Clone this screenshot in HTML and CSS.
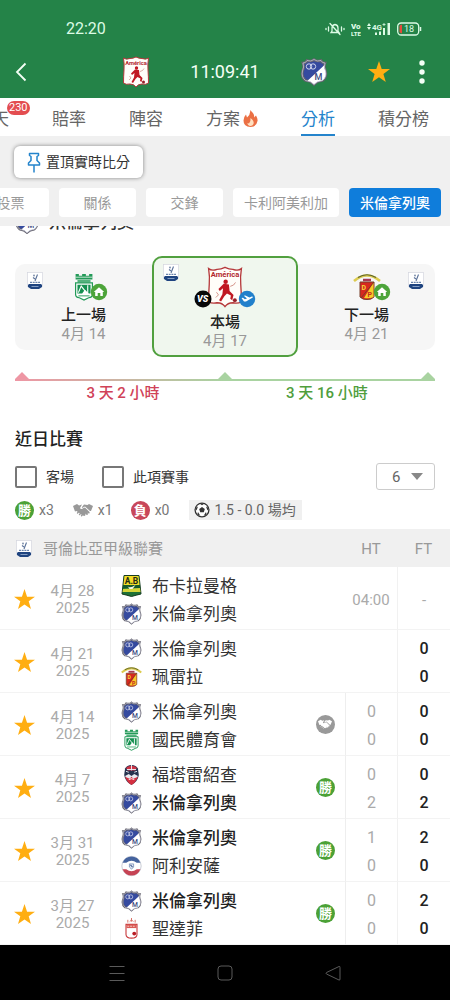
FILE: index.html
```html
<!DOCTYPE html>
<html lang="zh-Hant">
<head>
<meta charset="utf-8">
<meta name="viewport" content="width=device-width, initial-scale=1">
<title>分析</title>
<link rel="stylesheet" href="styles.css">
</head>
<body>
<svg class="sprite" aria-hidden="true">
  <symbol id="millonarios" viewBox="0 0 28 28">
    <path d="M3 5Q6 5 7 2.500Q11 4 14 1.500Q17 4 21 2.500Q22 5 25 5Q23.500 9 25.500 13Q27 19 22.500 22.500Q17 23 14 26.500Q11 23 5.500 22.500Q1 19 2.500 13Q4.500 9 3 5Z" fill="#354a9f" stroke="#66646f" stroke-width="2.600"/>
    <path d="M24.500 7Q23.500 9.500 25.500 13Q27 19 22.500 22.500Q17 23 14 26.500Q11.500 23.500 7.500 22.800Z" fill="#fff"/>
    <path d="M3 5Q6 5 7 2.500Q11 4 14 1.500Q17 4 21 2.500Q22 5 25 5Q23.500 9 25.500 13Q27 19 22.500 22.500Q17 23 14 26.500Q11 23 5.500 22.500Q1 19 2.500 13Q4.500 9 3 5Z" fill="none" stroke="#c9cde0" stroke-width=".7"/>
    <circle cx="9" cy="8.500" r="2.700" fill="none" stroke="#dfe3f4" stroke-width=".9"/>
    <circle cx="13" cy="8.500" r="2.700" fill="none" stroke="#dfe3f4" stroke-width=".9"/>
    <text x="14.500" y="21.500" font-size="9" font-weight="500" fill="#3c4a80">M</text>
  </symbol>
  <symbol id="america" viewBox="0 0 28 32">
    <path d="M1.500 2Q4 4 8 2.500Q11 2.500 14 1Q17 2.500 20 2.500Q24 4 26.500 2Q25.500 8 26 14Q26.500 21 26.500 27Q24 29 20 28Q16 28 14 31Q12 28 8 28Q4 29 1.500 27Q1.500 21 2 14Q2.500 8 1.500 2Z" fill="#fffdf9" stroke="#b5383a"/>
    <text x="14" y="8.500" font-size="5.800" font-weight="700" text-anchor="middle" fill="#b3282e">América</text>
    <circle cx="14.500" cy="12" r="1.700" fill="#c01822"/>
    <path d="M13 13.500L17 14L17.500 19L20.500 22L19.500 26L18 25L18.500 22.500L15.500 21L13.500 23L11 27L9.500 26L12 21.500L12.500 17L10 19L9 17.500Z" fill="#c01822"/>
    <path d="M18 15.500L20.500 14.500L22 12.500M7.500 20L9 22L7 24" fill="none" stroke="#d08a80" stroke-width=".7"/>
    <circle cx="21.500" cy="26" r="1.500" fill="#96202a"/>
  </symbol>
  <symbol id="nacional" viewBox="0 0 22 30">
    <path d="M2 1H5.500V3H9V1H13V3H16.500V1H20V7H2Z" fill="#239a58"/>
    <path d="M2 4.500H20" stroke="#fff" stroke-width=".8"/>
    <path d="M4 7.500H18V10.500H4Z" fill="#54b27d"/>
    <path d="M2 10.500H20V23Q20 26 16 26.500L11 29L6 26.500Q2 26 2 23Z" fill="#fff" stroke="#239a58" stroke-width="1.300"/>
    <path d="M4 12.500H18V22H16L12 18L9 22H4Z" fill="#159050"/>
    <path d="M5 21L8 14L15 23V13" stroke="#fff" stroke-width="1.200" fill="none"/>
    <path d="M5 24.500H17" stroke="#239a58"/>
  </symbol>
  <symbol id="pereira" viewBox="0 0 28 28">
    <path d="M1 8Q14-3 27 8" fill="none" stroke="#dccb4e" stroke-width="2.600"/>
    <path d="M5 4.500Q14-1 23 4.500" fill="none" stroke="#5d642e" stroke-width="1.200"/>
    <path d="M10 7H18" stroke="#a63a54" stroke-width="2.500"/>
    <path d="M7 9H21V24Q18 27 14 26.500Q10 27 7 24Z" fill="#d7281f" stroke="#79402a"/>
    <path d="M20.500 9.500V24Q17 26 11 25Z" fill="#f5cb28"/>
    <path d="M21 9L8 25" stroke="#51442a" stroke-width=".7"/>
    <text x="8.500" y="17" font-size="7" font-weight="700" fill="#f5d63c">D</text>
    <text x="14.500" y="24" font-size="7" font-weight="700" fill="#c92620">P</text>
  </symbol>
  <symbol id="bucaramanga" viewBox="0 0 20 22">
    <path d="M2.500.5H17.500L19.500 19Q15 20 10 21.500Q5 20 .5 19Z" fill="#1e7136" stroke="#163c20"/>
    <path d="M3 1H17L18 10H2Z" fill="#f3dc26"/>
    <path d="M2 10H18L18.500 13H1.500Z" fill="#155b2a"/>
    <path d="M1.500 14L18.500 13L19 17H1Z" fill="#d5d53a"/>
    <path d="M6 11Q8 14 14 10L11 14H8Z" fill="#f5f8e8"/>
    <text x="10" y="8.500" font-size="8.500" font-weight="700" text-anchor="middle" fill="#222b16">A.B</text>
  </symbol>
  <symbol id="fortaleza" viewBox="0 0 20 24">
    <path d="M3 5Q5 1 10 1Q15 1 17 5L18 12Q17 19 10 23Q3 19 2 12Z" fill="#26334f"/>
    <path d="M4 4Q10 0 16 4L14 7H6Z" fill="#cd3446"/>
    <path d="M10 1V7M5 6L15 6M4 8L7 9M13 9L16 8" stroke="#eef0f6"/>
    <path d="M3 13L7 11L10 13L13 11L17 13Q16 16 13 18H7Q4 16 3 13Z" fill="#e8eaf0"/>
    <path d="M3 14L8 16L10 14L12 16L17 14Q15 20 10 23Q5 20 3 14Z" fill="#d42f40"/>
    <path d="M7 17Q10 15 13 17" stroke="#fff" fill="none"/>
  </symbol>
  <symbol id="alianza" viewBox="0 0 20 20">
    <circle cx="10" cy="10" r="9.200" fill="#fff" stroke="#b8bcc8" stroke-width=".7"/>
    <path d="M1.500 7Q4 1 10 1Q16 1 18.500 7L15 7Q10 3 5 7Z" fill="#45639e"/>
    <path d="M1.500 13Q4 19 10 19Q16 19 18.500 13L15 13Q10 17 5 13Z" fill="#c64354"/>
    <path d="M8 8H12V11L10 13L8 11Z" fill="#e6ecf5" stroke="#6c85ae" stroke-width=".7"/>
    <path d="M9 9L11 11" stroke="#3d578f"/>
  </symbol>
  <symbol id="santafe" viewBox="0 0 20 24">
    <path d="M10 0V4M6 2V5M14 2V5M8 4L10 2L12 4" stroke="#d8685e" fill="none"/>
    <path d="M4 7H16V18Q16 22 10 22Q4 22 4 18Z" fill="#fff" stroke="#c8383b" stroke-width="1.200"/>
    <path d="M4.500 7H15.500V11H4.500Z" fill="#da5b55"/>
    <path d="M5.500 9H14.500" stroke="#f6cfc9" stroke-dasharray="2 1"/>
    <circle cx="13" cy="17" r="2.100" fill="#b91c24"/>
  </symbol>
  <symbol id="league" viewBox="0 0 16 18">
    <rect x=".5" y=".5" width="15" height="14" fill="#fff" stroke="#d4d6de" stroke-width=".7"/>
    <path d="M10.500 2.500L8 9M6 5.500L8 7" stroke="#5b7299" stroke-width="1.100" fill="none"/>
    <circle cx="7" cy="3.500" r=".9" fill="#7688a6"/>
    <path d="M3 10.300H13" stroke="#6b84ab" stroke-width="1.200" stroke-dasharray="2 .7"/>
    <path d="M2 12H14L15 13V15L12 17H4L1 15V13Z" fill="#1f4480"/>
    <path d="M4.500 14.500H11.500" stroke="#9db2d3" stroke-width=".8"/>
  </symbol>
  <symbol id="star" viewBox="0 0 22 22"><path d="M11 0L13.700 8H22L15.400 12.900L17.800 21L11 16.200L4.200 21L6.600 12.900L0 8H8.300Z" fill="#ffae12"/></symbol>
  <symbol id="handshake" viewBox="0 0 20 14">
    <path d="M0 3L4 1L6 2.500L9 1.500L7 5Q8 7 10.500 5L12 4.500L16.500 9Q17 10.500 15.500 10.500L14.500 9.500L15 11Q14.500 12.500 13 11.500L12 10.500L12.500 12Q11.500 13.500 10 12.500L3.500 8L2 8.500Z" fill="currentColor"/>
    <path d="M9 4Q8.500 5.500 10 4.500L12 3.500L17 8L18 8L20 3L16 1L14.500 2L11 1.500Z" fill="currentColor"/>
    <path d="M4.500 10L6 8.500M6.500 11.500L8 10M8.500 12.800L9.500 11.500" stroke="currentColor" stroke-width="1.400" stroke-linecap="round"/>
  </symbol>
  <symbol id="home-badge" viewBox="0 0 18 18">
    <circle cx="9" cy="9" r="8.200" fill="#4da43a"/>
    <path d="M3.800 9L9 4.300L14.200 9H12.800V13H10.300V10H7.700V13H5.200V9Z" fill="#fff"/>
  </symbol>
  <symbol id="away-badge" viewBox="0 0 18 18">
    <circle cx="9" cy="9" r="8.200" fill="#2280cb"/>
    <path d="M3.500 8L5 7.800L6.800 9.200L9 8.500L5.800 5.800L7.300 5.400L11.500 7.500L13.800 6.400Q15.300 6.300 14.800 7.500L8 11.600L6 11.500Z" fill="#fff"/>
  </symbol>
  <symbol id="vs-badge" viewBox="0 0 18 18">
    <circle cx="9" cy="9" r="8.500" fill="#080808"/>
    <text x="8.700" y="12.300" font-size="9" font-weight="900" font-style="italic" text-anchor="middle" fill="#fff">VS</text>
  </symbol>
  <symbol id="ball" viewBox="0 0 16 16">
    <circle cx="8" cy="8" r="6.900" fill="#fff" stroke="#333" stroke-width="1.300"/>
    <path d="M8 5L10.800 7L9.800 10.300H6.200L5.200 7Z" fill="#333"/>
    <path d="M5.500 1.500H10.500L8 3.300ZM1.200 6L4 4.500L2.500 8.500ZM14.800 6L12 4.500L13.500 8.500ZM3.300 12.500L4 10L6.300 13.700ZM12.700 12.500L12 10L9.700 13.700Z" fill="#333"/>
  </symbol>
</svg>

<div class="app">
  <header class="top">
    <div class="status">
      <time>22:20</time>
      <div class="status-icons">
        <svg class="ic-bell" viewBox="0 0 20 14" fill="none" stroke="currentColor" stroke-width="1.300" stroke-linecap="round"><path d="M6 10.500H14L13 9V6Q13 3 10 2.500Q7 3 7 6V9ZM5 1.500L15 12.500M3.500 5V9M16.500 5V9M1 6.500V7.500M19 6.500V7.500"/></svg>
        <svg class="ic-volte" viewBox="0 0 10 14" fill="currentColor" font-weight="900"><text x="0" y="6.500" font-size="8">Vo</text><text x="0" y="13.500" font-size="6">LTE</text></svg>
        <svg class="ic-signal" viewBox="0 0 24 14" fill="currentColor"><path d="M0 4L2 1L4 4ZM0 5L2 8L4 5ZM8 10.500H10V13H8ZM12 9.500H14V13H12ZM16 6H18V13H16ZM20.500 1H23V13H20.500Z"/><text x="5" y="7.500" font-size="8" font-weight="700">4G</text><path d="M15.500 2.500H18.500M17 1V4" stroke="currentColor" stroke-width=".8"/></svg>
        <svg class="ic-battery" viewBox="0 0 25 14"><rect x=".7" y="1" width="21" height="12" rx="3.500" fill="none" stroke="currentColor" stroke-width="1.300"/><path d="M2.500 4.500Q2.500 2.700 4.500 2.700H5V11.300H4.500Q2.500 11.300 2.500 9.500Z" fill="#e5493a"/><path d="M23.500 5V9" stroke="currentColor" stroke-width="1.500"/><text x="12" y="10.300" font-size="9" text-anchor="middle" fill="currentColor">18</text></svg>
      </div>
    </div>
    <div class="titlebar">
      <button class="icon-btn back" aria-label="返回"><svg viewBox="0 0 12 20" fill="none" stroke="currentColor" stroke-width="1.800"><path d="M10.500 1.500L2 10L10.500 18.500"/></svg></button>
      <div class="fixture">
        <svg class="fixture-home"><use href="#america"/></svg>
        <span class="clock">11:09:41</span>
        <svg class="fixture-away"><use href="#millonarios"/></svg>
      </div>
      <div class="actions">
        <button class="icon-btn fav" aria-label="收藏"><svg><use href="#star"/></svg></button>
        <button class="icon-btn more" aria-label="更多"><svg viewBox="0 0 6 24" fill="currentColor"><circle cx="3" cy="3" r="2.700"/><circle cx="3" cy="12" r="2.700"/><circle cx="3" cy="21" r="2.700"/></svg></button>
      </div>
    </div>
  </header>

  <nav class="tabs">
    <a href="#chat">天<span class="count">230</span></a>
    <a href="#odds">賠率</a>
    <a href="#lineup">陣容</a>
    <a href="#tips">方案<svg class="fire" viewBox="0 0 15 17"><path d="M7 0Q12 4 11 7.500L13 5.500Q15 9 14.500 11Q13.500 17 7.500 17Q.5 17 .5 10.500Q.5 7 3 4.500L4 7.500Q8 4 7 0Z" fill="#eb7044"/><path d="M7.500 8Q11.500 11 10.500 14Q9.500 16 7.500 16Q4.500 15.500 4.500 13L6 13.500Q8 11 7.500 8Z" fill="#ffe0c0"/></svg></a>
    <a href="#analysis" class="active" aria-current="page">分析</a>
    <a href="#table">積分榜</a>
  </nav>

  <div class="toolbar">
    <button class="pin-btn"><svg viewBox="0 0 14 21" fill="none" stroke="#2484cc" stroke-width="1.500" stroke-linejoin="round"><path d="M2.500 1.500H11.500V3.500L10 4.500V8.500L12.500 11V13H1.500V11L4 8.500V4.500L2.500 3.500ZM7 13V20.500"/></svg>置頂實時比分</button>
    <div class="chips">
      <button class="chip">投票</button>
      <button class="chip">關係</button>
      <button class="chip">交鋒</button>
      <button class="chip">卡利阿美利加</button>
      <button class="chip chip-on">米倫拿列奧</button>
    </div>
  </div>

  <main>
    <div class="team-scroll"><h2 class="team-head"><svg><use href="#millonarios"/></svg>米倫拿列奧</h2></div>

    <section class="schedule">
      <article class="card card-prev">
        <svg class="card-league"><use href="#league"/></svg>
        <div class="card-crest"><svg class="crest"><use href="#nacional"/></svg><svg class="mark mark-right"><use href="#home-badge"/></svg></div>
        <h3>上一場</h3><p>4月 14</p>
      </article>
      <article class="card card-now">
        <svg class="card-league"><use href="#league"/></svg>
        <div class="card-crest"><svg class="crest"><use href="#america"/></svg><svg class="mark mark-left"><use href="#vs-badge"/></svg><svg class="mark mark-right"><use href="#away-badge"/></svg></div>
        <h3>本場</h3><p>4月 17</p>
      </article>
      <article class="card card-next">
        <svg class="card-league"><use href="#league"/></svg>
        <div class="card-crest"><svg class="crest"><use href="#pereira"/></svg><svg class="mark mark-right"><use href="#home-badge"/></svg></div>
        <h3>下一場</h3><p>4月 21</p>
      </article>
    </section>

    <section class="timeline">
      <div class="peaks"><i class="peak peak-red"></i><i class="peak"></i><i class="peak"></i></div>
      <div class="track"></div>
      <div class="spans"><span class="span-red">3 天 2 小時</span><span>3 天 16 小時</span></div>
    </section>

    <h2 class="recent-title">近日比賽</h2>
    <form class="filters">
      <label><input type="checkbox">客場</label>
      <label><input type="checkbox">此項賽事</label>
      <div class="picker"><select aria-label="場數"><option>6</option></select></div>
    </form>
    <div class="summary">
      <span class="tally"><b class="dot win">勝</b>x3</span>
      <span class="tally tally-draw"><svg class="shake"><use href="#handshake"/></svg>x1</span>
      <span class="tally tally-loss"><b class="dot loss">負</b>x0</span>
      <span class="average"><svg><use href="#ball"/></svg>1.5 - 0.0 場均</span>
    </div>

    <table class="matches">
      <colgroup><col class="c-star"><col class="c-date"><col><col class="c-res"><col class="c-ht"><col class="c-ft"></colgroup>
      <thead>
        <tr><th colspan="4" class="league"><div><svg><use href="#league"/></svg>哥倫比亞甲級聯賽</div></th><th>HT</th><th>FT</th></tr>
      </thead>
      <tbody>
        <tr>
          <td class="star"><button class="icon-btn" aria-label="收藏"><svg><use href="#star"/></svg></button></td>
          <td class="date">4月 28<br>2025</td>
          <td class="teams"><div><svg><use href="#bucaramanga"/></svg>布卡拉曼格</div><div><svg><use href="#millonarios"/></svg>米倫拿列奧</div></td>
          <td></td><td class="kickoff">04:00</td><td class="ft pending">-</td>
        </tr>
        <tr>
          <td class="star"><button class="icon-btn" aria-label="收藏"><svg><use href="#star"/></svg></button></td>
          <td class="date">4月 21<br>2025</td>
          <td class="teams"><div><svg><use href="#millonarios"/></svg>米倫拿列奧</div><div><svg><use href="#pereira"/></svg>珮雷拉</div></td>
          <td></td><td></td><td class="ft"><div>0</div><div>0</div></td>
        </tr>
        <tr>
          <td class="star"><button class="icon-btn" aria-label="收藏"><svg><use href="#star"/></svg></button></td>
          <td class="date">4月 14<br>2025</td>
          <td class="teams"><div><svg><use href="#millonarios"/></svg>米倫拿列奧</div><div><svg><use href="#nacional"/></svg>國民體育會</div></td>
          <td class="res"><b class="dot draw"><svg class="shake"><use href="#handshake"/></svg></b></td>
          <td class="ht"><div>0</div><div>0</div></td><td class="ft"><div>0</div><div>0</div></td>
        </tr>
        <tr>
          <td class="star"><button class="icon-btn" aria-label="收藏"><svg><use href="#star"/></svg></button></td>
          <td class="date">4月 7<br>2025</td>
          <td class="teams"><div><svg><use href="#fortaleza"/></svg>福塔雷紹查</div><div class="winner"><svg><use href="#millonarios"/></svg>米倫拿列奧</div></td>
          <td class="res"><b class="dot win">勝</b></td>
          <td class="ht"><div>0</div><div>2</div></td><td class="ft"><div>0</div><div>2</div></td>
        </tr>
        <tr>
          <td class="star"><button class="icon-btn" aria-label="收藏"><svg><use href="#star"/></svg></button></td>
          <td class="date">3月 31<br>2025</td>
          <td class="teams"><div class="winner"><svg><use href="#millonarios"/></svg>米倫拿列奧</div><div><svg><use href="#alianza"/></svg>阿利安薩</div></td>
          <td class="res"><b class="dot win">勝</b></td>
          <td class="ht"><div>1</div><div>0</div></td><td class="ft"><div>2</div><div>0</div></td>
        </tr>
        <tr>
          <td class="star"><button class="icon-btn" aria-label="收藏"><svg><use href="#star"/></svg></button></td>
          <td class="date">3月 27<br>2025</td>
          <td class="teams"><div class="winner"><svg><use href="#millonarios"/></svg>米倫拿列奧</div><div><svg><use href="#santafe"/></svg>聖達菲</div></td>
          <td class="res"><b class="dot win">勝</b></td>
          <td class="ht"><div>0</div><div>0</div></td><td class="ft"><div>2</div><div>0</div></td>
        </tr>
      </tbody>
    </table>
  </main>

  <nav class="sysnav">
    <button class="icon-btn" aria-label="選單"><svg viewBox="0 0 16 16" fill="none" stroke="currentColor"><path d="M.5 1.500H15.500M.5 8.500H15.500M.5 15.500H15.500"/></svg></button>
    <button class="icon-btn" aria-label="主畫面"><svg viewBox="0 0 16 16" fill="none" stroke="currentColor"><rect x="1" y="1" width="14" height="14" rx="3"/></svg></button>
    <button class="icon-btn" aria-label="上一頁"><svg viewBox="0 0 16 16" fill="none" stroke="currentColor" stroke-linejoin="round"><path d="M14 1.500Q15 1 15 2.500V14Q15 15.500 14 15L1.500 9Q.5 8.200 1.500 7.500Z"/></svg></button>
  </nav>
</div>
</body>
</html>
```
FILE: styles.css
```css
* { box-sizing: border-box; }

body, h2, h3, p { margin: 0; }

body {
  font-family: Roboto, "Noto Sans CJK TC", sans-serif;
  font-size: 14px;
  line-height: 20px;
  color: #333;
  background: #fff;
}

button, select, input { font: inherit; }
svg { display: block; flex: none; }
.sprite { display: none; }

.icon-btn {
  display: flex;
  padding: 0;
  border: 0;
  background: none;
  color: inherit;
}

.app {
  display: flex;
  flex-direction: column;
  min-height: 100vh;
  overflow: hidden;
}

main { flex: 1; }

/* Header */
.top { background: #248348; color: #dcfbe5; }

.status {
  display: flex;
  align-items: center;
  justify-content: space-between;
  padding: 18px 28px 6px 66px;
  font-size: 16px;
  line-height: 22px;
}

.status-icons { display: flex; align-items: center; gap: 6px; }
.status-icons svg { height: 14px; }
.ic-bell { width: 20px; }
.ic-volte { width: 10px; }
.ic-signal { width: 24px; }
.ic-battery { width: 25px; }

.titlebar {
  display: grid;
  grid-template-columns: 1fr auto 1fr;
  align-items: center;
  height: 52px;
  padding: 0 25px 0 15px;
  color: #f4fff6;
}

.back svg { width: 12px; height: 20px; }
.fixture { display: flex; align-items: center; gap: 40px; padding-left: 10px; }
.fixture svg { width: 28px; height: 32px; }
.clock { font-size: 18px; }
.actions { display: flex; align-items: center; justify-content: flex-end; gap: 29px; }
.fav svg { width: 22px; height: 22px; }
.more svg { width: 6px; height: 24px; }

/* Main tabs */
.tabs {
  display: flex;
  gap: 43px;
  height: 38px;
  margin-left: -8px;
  background: #fff;
  white-space: nowrap;
}

.tabs a {
  position: relative;
  display: flex;
  align-items: center;
  padding-top: 5px;
  border-bottom: 2px solid transparent;
  color: #666;
  font-size: 17px;
  text-decoration: none;
}

.tabs .active { color: #2484cc; border-color: #2484cc; }
.fire { width: 15px; height: 17px; margin-left: 3px; }

.count {
  position: absolute;
  top: 3px;
  left: 15px;
  padding: 0 2px;
  border-radius: 7px;
  background: #e34d50;
  color: #fff;
  font-size: 11px;
  line-height: 14px;
}

/* Section chips */
.toolbar {
  display: flex;
  flex-direction: column;
  align-items: flex-start;
  gap: 10px;
  padding: 10px 0 9px;
  background: #f0f0f0;
}

.pin-btn {
  display: flex;
  align-items: center;
  gap: 5px;
  height: 32px;
  margin-left: 14px;
  padding: 0 13px;
  border: 0;
  border-radius: 6px;
  background: #fff;
  box-shadow: 0 0 4px rgba(0, 0, 0, .45);
  color: #333;
}

.pin-btn svg { width: 14px; height: 21px; }
.chips { display: flex; gap: 10px; margin-left: -28px; }

.chip {
  min-width: 77px;
  height: 29px;
  padding: 0 11px;
  border: 0;
  border-radius: 4px;
  background: #fff;
  color: #999;
  white-space: nowrap;
}

.chip-on { background: #0f7ddb; color: #fff; font-weight: 500; }

/* Team heading, scrolled partly under the toolbar */
.team-scroll { height: 30px; overflow: hidden; }

.team-head {
  display: flex;
  align-items: center;
  gap: 10px;
  margin: -16px 0 0 15px;
  font-size: 17px;
  font-weight: 500;
  line-height: 24px;
}

.team-head svg { width: 24px; height: 24px; }

/* Fixture cards */
.schedule {
  display: grid;
  grid-template-columns: 1fr 146px 1fr;
  align-items: center;
  padding: 0 15px;
}

.card {
  position: relative;
  padding: 9px 0 7px;
  background: #f6f6f6;
  text-align: center;
}

.card-prev { border-radius: 10px 0 0 10px; }
.card-next { border-radius: 0 10px 10px 0; }
.card-now { padding: 8px 0 5px; border: 2px solid #51a03f; border-radius: 10px; background: #f0f7ee; }
.card-league { position: absolute; top: 8px; left: 12px; width: 16px; height: 18px; }
.card-now .card-league { top: 6px; left: 9px; }
.card-next .card-league { right: 11px; left: auto; }

.card-crest { position: relative; width: 28px; margin: 0 auto 4px; }
.crest { width: 28px; height: 28px; }
.card-now .card-crest { width: 38px; }
.card-now .crest { width: 38px; height: 42px; }
.mark { position: absolute; bottom: 0; width: 18px; height: 18px; }
.mark-right { right: -10px; }
.mark-left { left: -12px; }
.card-now .mark-right { right: -12px; }

.card h3 { font-size: 15px; font-weight: 500; color: #222; }
.card p { font-size: 15px; line-height: 18px; color: #999; }

/* Rest-day timeline */
.timeline { padding: 15px 15px 0; }
.peaks { display: flex; justify-content: space-between; }
.peak { width: 14px; height: 7px; background: #a9d3a1; clip-path: polygon(50% 0, 100% 100%, 0 100%); }
.peak-red { background: #ee96a4; }
.track { height: 2px; background: linear-gradient(90deg, #ee96a4, #a9d3a1 50%); }

.spans {
  display: grid;
  grid-template-columns: 1fr 1fr;
  padding: 2px 6px 0;
  color: #4f9e3d;
  font-size: 15px;
  font-weight: 500;
  text-align: center;
}

.span-red { color: #d04258; }

/* Recent matches */
.recent-title { margin: 24px 15px 12px; font-size: 17px; font-weight: 500; line-height: 24px; color: #222; }

.filters { display: flex; align-items: center; gap: 28px; padding: 0 15px; }
.filters label { display: flex; align-items: center; gap: 9px; }

.filters input {
  width: 22px;
  height: 22px;
  margin: 0;
  border: 2px solid #777;
  border-radius: 2px;
  appearance: none;
}

.picker { position: relative; margin-left: auto; }

.picker select {
  width: 59px;
  height: 27px;
  padding: 0 15px;
  border: 1px solid #ccc;
  border-radius: 3px;
  background: #fff;
  color: #666;
  font-size: 15px;
  appearance: none;
}

.picker::after {
  content: "";
  position: absolute;
  top: 10px;
  right: 12px;
  border: 6px solid transparent;
  border-top: 7px solid #888;
  border-bottom: 0;
  pointer-events: none;
}

.summary { display: flex; align-items: center; margin: 10px 15px 9px; color: #777; }
.tally { display: flex; align-items: center; gap: 5px; }
.tally-draw { margin-left: 19px; }
.tally-loss { margin-left: 18px; }
.tally .shake { color: #999; }
.shake { width: 20px; height: 14px; }
.average { display: flex; align-items: center; gap: 4px; margin-left: 20px; padding: 0 6px 0 5px; background: #f0f0f0; color: #666; }
.average svg { width: 16px; height: 16px; }

.dot {
  display: inline-flex;
  align-items: center;
  justify-content: center;
  width: 19px;
  height: 19px;
  border-radius: 50%;
  color: #fff;
  font-size: 13px;
  font-weight: 700;
  line-height: 19px;
}

.win { background: #4ba136; }
.loss { background: #c8475a; }
.draw { background: #999; }
.draw .shake { width: 14px; height: 10px; }

.matches { width: 100%; border-collapse: separate; border-spacing: 0; table-layout: fixed; }
.c-star { width: 48px; }
.c-date { width: 63px; }
.c-res { width: 39px; }
.c-ht { width: 52px; }
.c-ft { width: 53px; }

.matches th { height: 38px; padding: 2px 0 0; background: #f0f0f0; color: #999; font-size: 15px; font-weight: 400; }
.league div { display: flex; align-items: center; gap: 11px; padding-left: 16px; }
.league svg { width: 16px; height: 18px; }

.matches td { height: 63px; padding: 0; border-bottom: 1px solid #f3f3f3; text-align: center; }
.star button { margin: 2px auto 0; }
.star svg { width: 21px; height: 21px; }
.matches .date { padding: 4px 13px 0 0; border-right: 1px solid #eee; color: #aaa; font-size: 15px; line-height: 17px; }

.matches .teams { padding: 5px 0 1px 10px; font-size: 17px; color: #333; white-space: nowrap; }
.teams div { display: flex; align-items: center; gap: 10px; height: 28px; }
.teams svg { width: 21px; height: 22px; }
.winner { font-weight: 500; color: #222; }
.res { color: #fff; }

.matches .ht, .matches .ft { padding-top: 3px; font-size: 16px; line-height: 28px; }
.matches .ht { border-left: 1px solid #eee; color: #aaa; }
.matches .ft { border-left: 1px solid #f1f1f1; color: #222; font-weight: 500; }
.matches .pending { color: #aaa; font-size: 15px; font-weight: 400; }
.matches .kickoff { padding-top: 3px; color: #aaa; font-size: 15px; }

/* System navigation */
.sysnav {
  display: flex;
  align-items: center;
  justify-content: center;
  gap: 92px;
  height: 55px;
  background: #000;
  color: #5a5a5a;
}

.sysnav svg { width: 16px; height: 16px; }
```
